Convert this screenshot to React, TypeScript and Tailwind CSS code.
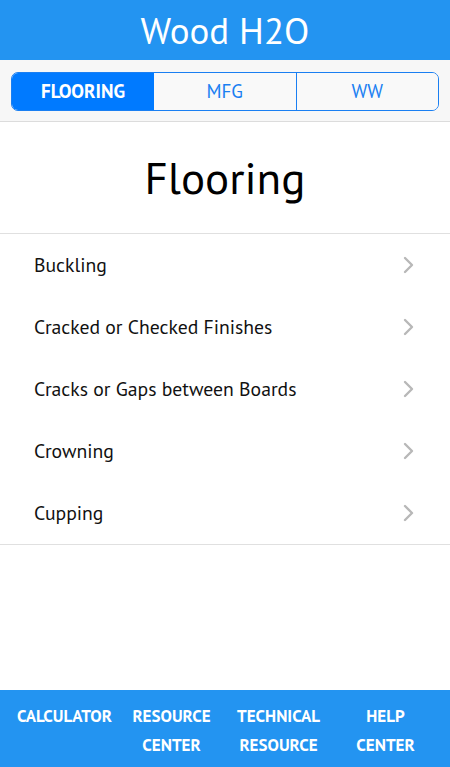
import React from "react";

const items = [
  "Buckling",
  "Cracked or Checked Finishes",
  "Cracks or Gaps between Boards",
  "Crowning",
  "Cupping",
];

function Chevron() {
  return (
    <svg width="14" height="20" viewBox="0 0 14 20" fill="none">
      <path d="M3 3 L10 10 L3 17" stroke="#b8b8b8" strokeWidth="2.4" strokeLinecap="round" strokeLinejoin="round" />
    </svg>
  );
}

export default function App() {
  return (
    <div
      className="w-[450px] h-[767px] flex flex-col bg-white overflow-hidden"
      style={{ fontFamily: "'PT Sans', Lato, 'Open Sans', sans-serif" }}
    >
      <div className="h-[60px] bg-[#2394f1] flex items-center justify-center">
        <span className="text-white text-[37px] leading-none">Wood H2O</span>
      </div>
      <div className="h-[62px] bg-[#f7f7f7] border-b border-[#dcdcdc] px-[11px] pt-[12px]">
        <div className="h-[39px] flex rounded-[7px] border border-[#1a7ff2] overflow-hidden">
          <div className="w-[142px] bg-[#007aff] text-white flex items-center justify-center text-[19px] font-semibold">
            FLOORING
          </div>
          <div className="flex-1 bg-[#f9f9f9] text-[#1a7ff2] flex items-center justify-center text-[19px] border-r border-[#1a7ff2]">
            MFG
          </div>
          <div className="flex-1 bg-[#f9f9f9] text-[#1a7ff2] flex items-center justify-center text-[19px]">
            WW
          </div>
        </div>
      </div>
      <div className="h-[112px] flex items-center justify-center border-b border-[#e0e0e0]">
        <span className="text-[45px] text-black leading-none">Flooring</span>
      </div>
      <div className="border-b border-[#e0e0e0]">
        {items.map((t) => (
          <div key={t} className="h-[62px] flex items-center justify-between pl-[34px] pr-[34px]">
            <span className="text-[19.7px] text-[#111]">{t}</span>
            <Chevron />
          </div>
        ))}
      </div>
      <div className="flex-1" />
      <div className="h-[77px] bg-[#2394f1] grid grid-cols-4 px-[11px] pt-[12px] text-white text-[17px] leading-[29px] font-semibold text-center">
        <div>CALCULATOR</div>
        <div>RESOURCE<br />CENTER</div>
        <div>TECHNICAL<br />RESOURCE</div>
        <div>HELP<br />CENTER</div>
      </div>
    </div>
  );
}
